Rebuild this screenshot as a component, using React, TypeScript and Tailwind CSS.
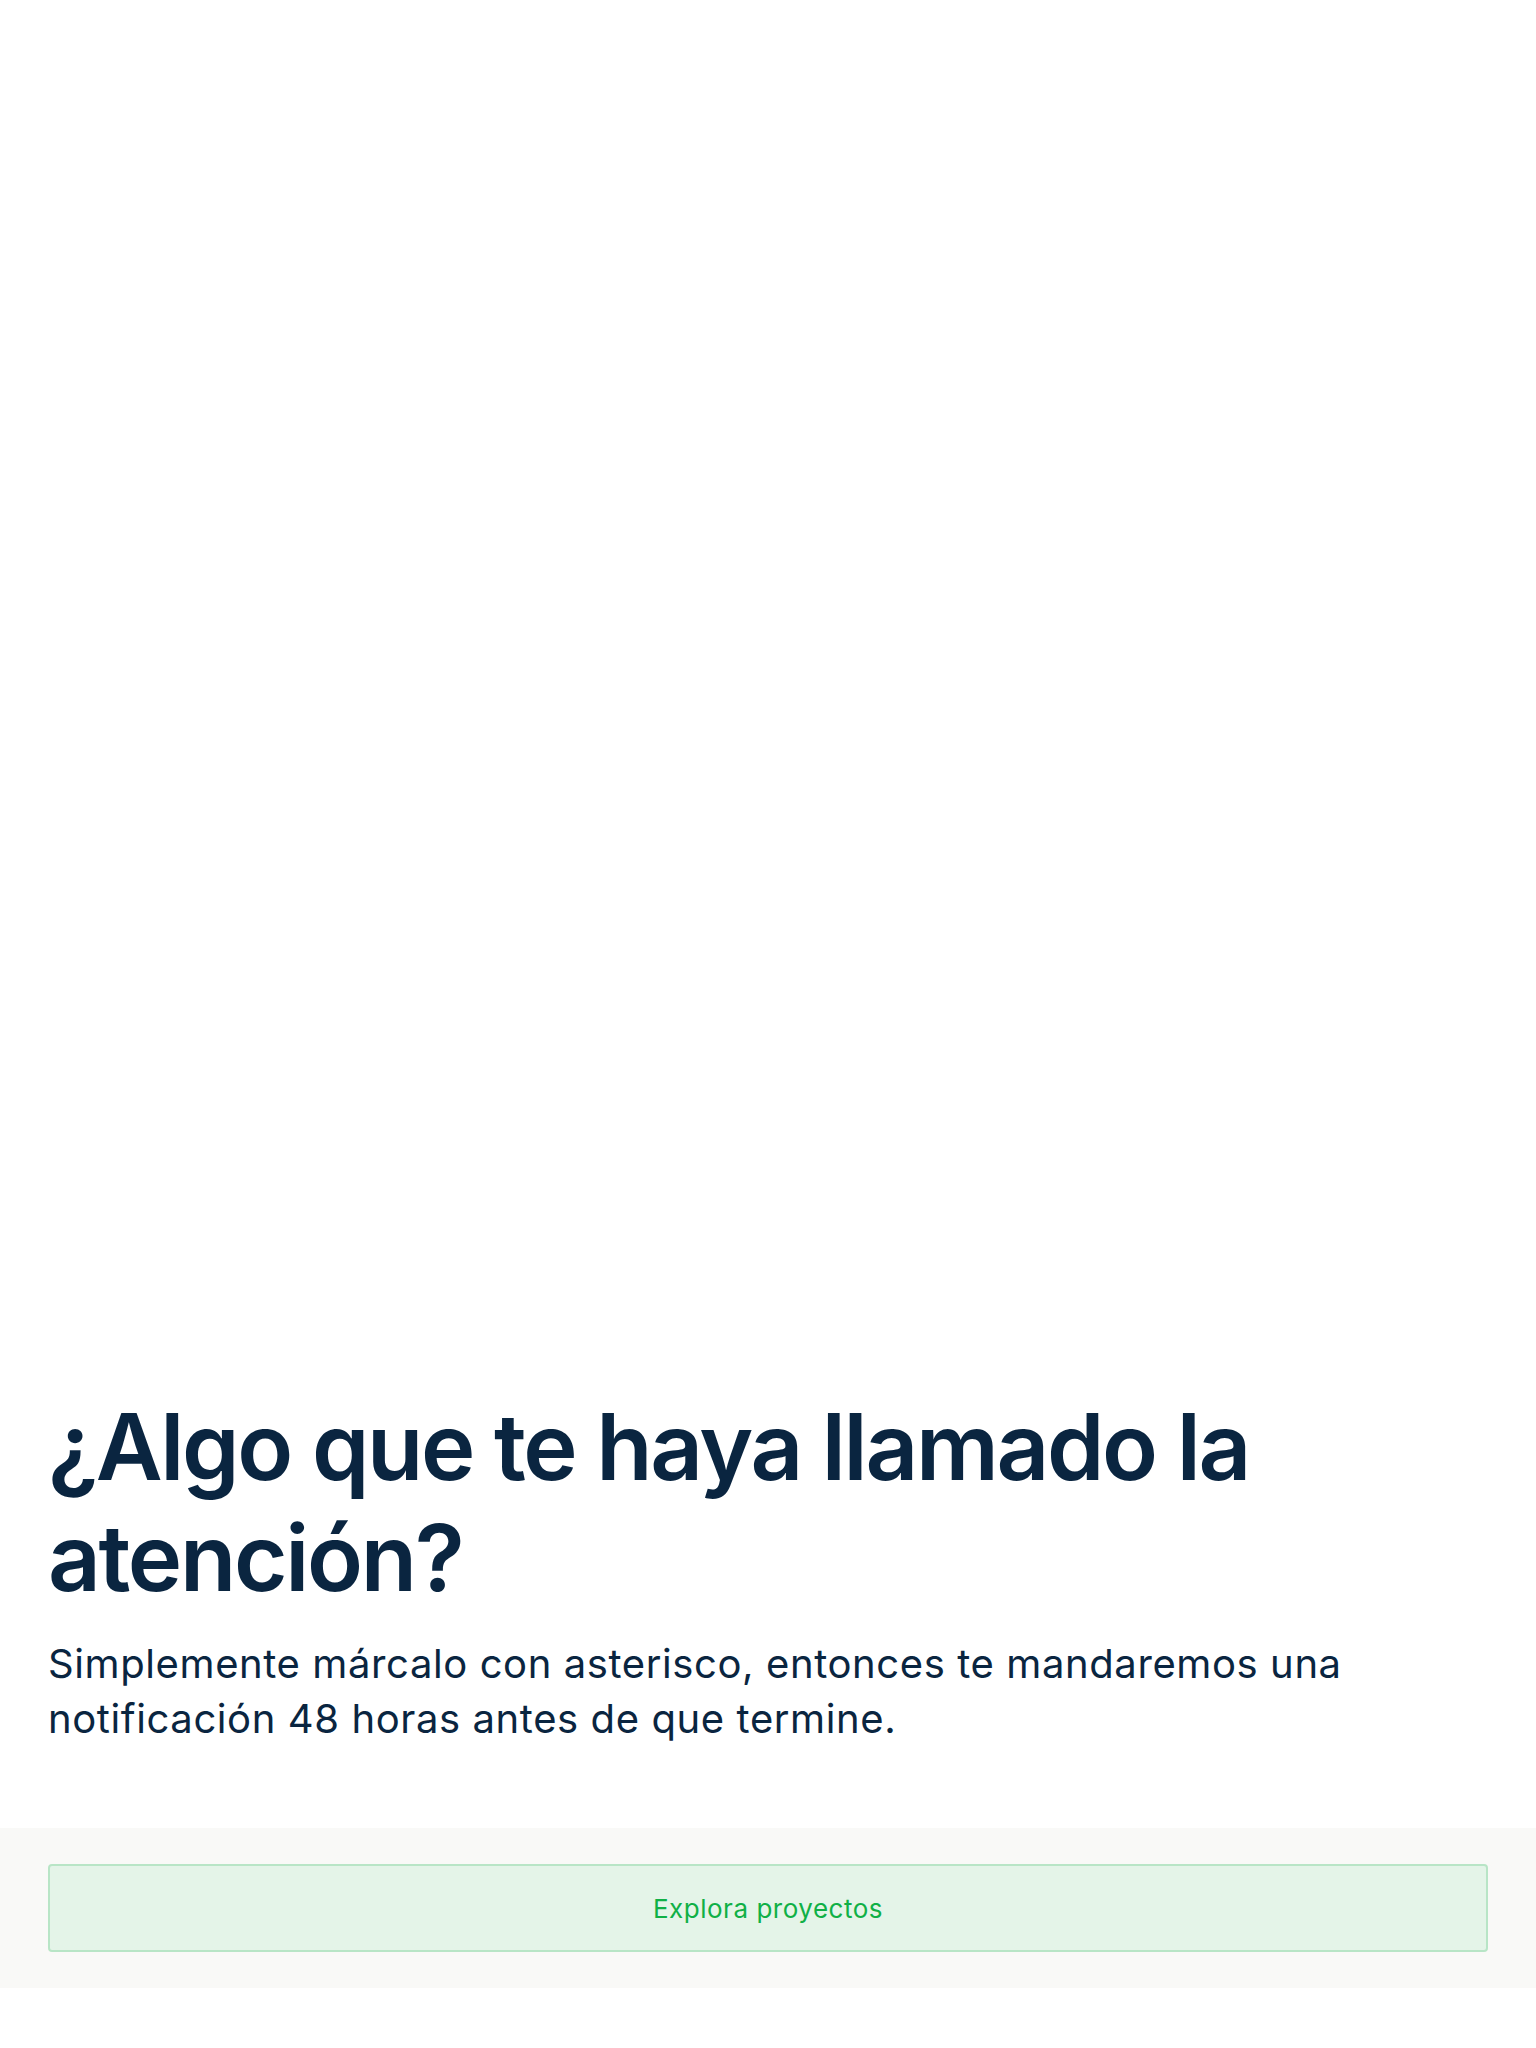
export default function App() {
  return (
    <div
      className="min-h-screen bg-white"
      style={{ fontFamily: "Inter, 'Noto Sans', sans-serif" }}
    >
      {/* hero area left empty */}
      <div className="h-[1391px]" />

      <div className="px-12">
        <h1 className="text-[92px] leading-[111px] font-semibold tracking-[-0.025em] text-[#0a2540]">
          ¿Algo que te haya llamado la atención?
        </h1>
        <p className="mt-[23px] text-[40px] leading-[55px] tracking-[0.015em] text-[#0a2540]">
          Simplemente márcalo con asterisco, entonces te mandaremos una
          notificación 48 horas antes de que termine.
        </p>
      </div>

      <div className="mt-[82px] bg-[#f9f9f7] px-12 py-9">
        <button
          type="button"
          className="w-full h-[88px] rounded border-2 border-[#b8e5c6] bg-[#e4f4e8] text-[26px] tracking-[0.02em] text-[#10b046]"
        >
          Explora proyectos
        </button>
      </div>
    </div>
  );
}
